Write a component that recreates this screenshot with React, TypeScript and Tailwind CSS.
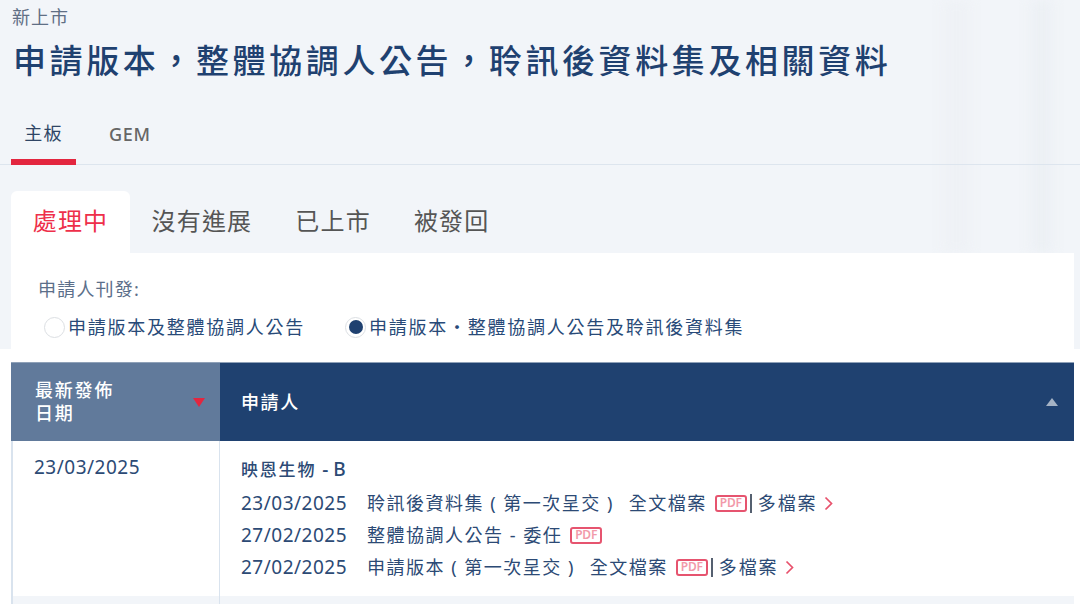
import React from 'react';

const font = 'font-["Noto_Sans","Noto_Sans_CJK_TC",sans-serif]';

const PdfBadge = () => (
  <span className="ml-[8px] inline-flex h-[17px] w-[32px] items-center justify-center rounded-[3px] border-2 border-[#e6546f] text-[12px] leading-none font-semibold tracking-[-0.2px] text-[#f29aaa]">
    PDF
  </span>
);

const Chevron = () => (
  <svg width="9" height="15" viewBox="0 0 9 15" className="ml-[7px] mt-[1px]" fill="none" stroke="#e8516c" strokeWidth="1.7">
    <path d="M1.5 1.5 L7.5 7.5 L1.5 13.5" />
  </svg>
);

const MultiFile = () => (
  <>
    <span className="ml-[3px] h-[19px] w-[2px] bg-[#556070]" />
    <span className="ml-[6px] tracking-[1.8px]">多檔案</span>
    <Chevron />
  </>
);

interface DocRowProps {
  date: string;
  children: React.ReactNode;
}

const DocRow: React.FC<DocRowProps> = ({ date, children }) => (
  <div className="flex h-[32px] items-center">
    <span className="w-[126px] text-[19px] tracking-[0.5px]">{date}</span>
    <span className="flex items-center text-[18px] tracking-[1.5px]">{children}</span>
  </div>
);

export default function App() {
  return (
    <div className={`${font} relative flex h-[604px] w-[1080px] flex-col overflow-hidden bg-[#f2f5f9]`}>
      {/* faint backdrop stripes on the right */}
      <div className="pointer-events-none absolute top-0 left-[943px] h-[253px] w-[27px] bg-[#eef1f5] blur-[6px]" />
      <div className="pointer-events-none absolute top-0 left-[1030px] h-[253px] w-[23px] bg-[#ecf0f4] blur-[6px]" />

      <div className="relative shrink-0 px-[11px]">
        <div className="h-[34px] pt-[5px] pl-[1px] text-[18px] leading-[24px] tracking-[1px] text-[#5f6f85]">新上市</div>
        <h1 className="h-[53px] pl-[2px] text-[33px] leading-[53px] font-medium tracking-[3.6px] text-[#1f4170]">
          申請版本，整體協調人公告，聆訊後資料集及相關資料
        </h1>
        <div className="mt-[17px] flex h-[61px] -mx-[11px] border-b border-[#dde5ee] pl-[11px]">
          <div className="flex h-[61px] w-[65px] items-start justify-center border-b-[6px] border-[#e3263f] pt-[16px] text-[18px] leading-[26px] tracking-[1.2px] text-[#2f4565]">
            主板
          </div>
          <div className="ml-[33px] pt-[17px] text-[18px] leading-[26px] font-medium tracking-[0.7px] text-[#666]">GEM</div>
        </div>
        <div className="mt-[26px] flex h-[62px] items-stretch">
          <div className="flex w-[119px] items-center justify-center rounded-t-[6px] bg-white pb-[3px] text-[24px] tracking-[1.2px] text-[#ee2f4a]">
            處理中
          </div>
          {['沒有進展', '已上市', '被發回'].map((t) => (
            <div key={t} className="mx-[21.5px] flex items-center pb-[3px] text-[24px] tracking-[1.2px] text-[#555]">
              {t}
            </div>
          ))}
        </div>
      </div>

      <div className="relative mx-[11px] h-[96px] w-[1063px] shrink-0 bg-white pt-[22px] pl-[27px]">
        <div className="text-[18px] leading-[28px] tracking-[1.2px] text-[#5c6f8a]">申請人刊發:</div>
        <div className="mt-[12px] flex h-[24px] items-center text-[18px] tracking-[1.75px] text-[#284a78]">
          <span className="ml-[6px] h-[21px] w-[21px] rounded-full border border-[#dcdfe3] bg-white" />
          <span className="ml-[3px]">申請版本及整體協調人公告</span>
          <span className="ml-[40px] flex h-[21px] w-[21px] items-center justify-center rounded-full border border-[#dcdfe3] bg-white">
            <span className="h-[14px] w-[14px] rounded-full bg-[#1f4170]" />
          </span>
          <span className="ml-[3px]">申請版本・整體協調人公告及聆訊後資料集</span>
        </div>
      </div>

      <div className="relative flex-1 bg-white pt-[13px] pl-[11px]">
        <div className="w-[1063px]">
          <div className="flex h-[79px] border-t border-[#8fa1b8] text-white">
            <div className="flex w-[209px] items-center justify-between bg-[#617a9b] pr-[15px] pl-[24px]">
              <div className="w-[84px] text-[18px] leading-[23px] font-medium tracking-[1.8px]">最新發佈 日期</div>
              <span className="h-0 w-0 border-x-[6px] border-t-[9px] border-x-transparent border-t-[#e3263f]" />
            </div>
            <div className="flex flex-1 items-center justify-between bg-[#1f4170] pr-[16px] pl-[21px]">
              <div className="text-[18px] font-medium tracking-[1.6px]">申請人</div>
              <span className="h-0 w-0 border-x-[6px] border-b-[8px] border-x-transparent border-b-[#a5b3c5]" />
            </div>
          </div>
          <div className="flex h-[155px] border-l-2 border-[#d9e3ee] text-[#2c4a75]">
            <div className="w-[207px] border-r border-[#d9e3ee] pt-[13px] pl-[21px] text-[19px] leading-[27px] tracking-[0.5px]">
              23/03/2025
            </div>
            <div className="flex-1 pt-[15px] pl-[21px]">
              <div className="mb-[5px] h-[26px] text-[17px] leading-[26px] font-medium tracking-[1.8px]">
                映恩生物<span className="ml-[1px] text-[19px] tracking-normal"> - B</span>
              </div>
              <DocRow date="23/03/2025">
                聆訊後資料集 ( 第一次呈交 )
                <span className="ml-[15px]">全文檔案</span>
                <PdfBadge />
                <MultiFile />
              </DocRow>
              <DocRow date="27/02/2025">
                整體協調人公告 - 委任
                <PdfBadge />
              </DocRow>
              <DocRow date="27/02/2025">
                申請版本 ( 第一次呈交 )
                <span className="ml-[15px]">全文檔案</span>
                <PdfBadge />
                <MultiFile />
              </DocRow>
            </div>
          </div>
          <div className="flex h-[10px] border-l-2 border-[#d9e3ee] bg-[#f2f5f9]">
            <div className="w-[207px] border-r border-[#d9e3ee]" />
          </div>
        </div>
      </div>
    </div>
  );
}
